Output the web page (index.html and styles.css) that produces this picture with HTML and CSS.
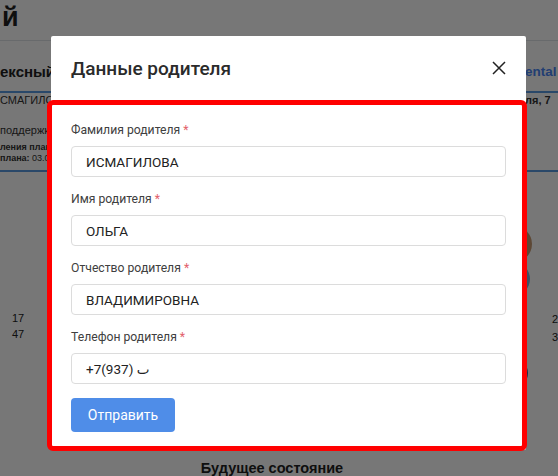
FILE: index.html
```html
<!DOCTYPE html>
<html lang="ru">
<head>
<meta charset="utf-8">
<title>Данные родителя</title>
<link rel="stylesheet" href="styles.css">
</head>
<body>
<div class="page">
  <header class="page-head">
    <h1 class="page-title">й</h1>
  </header>
  <section class="cards">
    <div class="card card-left">
      <h2 class="card-title">ексный</h2>
      <p class="card-line">СМАГИЛОВА</p>
      <p class="card-line card-gap">поддержка Т</p>
      <p class="card-small card-small-first"><b>ления плана:</b></p>
      <p class="card-small"><b>плана:</b> 03.04</p>
    </div>
    <div class="card card-right">
      <h2 class="card-title card-title-blue">ental</h2>
      <p class="card-line"><b>ля, 7</b></p>
    </div>
  </section>
  <section class="charts">
    <div class="chart-left">
      <div class="chart-nums">
        <span>17</span>
        <span>47</span>
      </div>
    </div>
    <div class="chart-mid"></div>
    <div class="chart-right">
      <div class="dots">
        <span class="dot dot-brown"></span>
        <span class="dot dot-blue"></span>
        <span class="dot dot-navy"></span>
      </div>
      <div class="chart-nums chart-nums-right">
        <span>2</span>
        <span>3</span>
      </div>
    </div>
  </section>
  <h2 class="future">Будущее состояние</h2>
</div>

<div class="overlay"></div>

<div class="modal">
  <div class="modal-header">
    <h3 class="modal-title">Данные родителя</h3>
    <button class="close" type="button" aria-label="Закрыть">
      <svg width="14" height="14" viewBox="0 0 14 14"><path d="M1 1L13 13M13 1L1 13" stroke="#222" stroke-width="1.5" fill="none"/></svg>
    </button>
  </div>
  <form class="modal-body">
    <div class="field">
      <label class="label">Фамилия родителя <span class="req">*</span></label>
      <input class="input" value="ИСМАГИЛОВА">
    </div>
    <div class="field">
      <label class="label">Имя родителя <span class="req">*</span></label>
      <input class="input" value="ОЛЬГА">
    </div>
    <div class="field">
      <label class="label">Отчество родителя <span class="req">*</span></label>
      <input class="input" value="ВЛАДИМИРОВНА">
    </div>
    <div class="field">
      <label class="label">Телефон родителя <span class="req">*</span></label>
      <input class="input" value="+7(937) ٮ">
    </div>
    <button class="submit" type="button">Отправить</button>
  </form>
  <div class="highlight"></div>
</div>
</body>
</html>
```

FILE: styles.css
```css
* { box-sizing: border-box; }
html, body { margin: 0; padding: 0; }
body {
  width: 558px;
  height: 476px;
  overflow: hidden;
  background: #fff;
  font-family: "Liberation Sans", Arial, sans-serif;
  color: #333;
}

/* background page */
.page { width: 558px; }
.page-head {
  height: 41px;
  border-bottom: 1px solid #dfe3e8;
}
.page-title {
  margin: 0;
  padding: 2px 0 0 2px;
  font-size: 27px;
  line-height: 30px;
  font-weight: 700;
  color: #222;
}
.cards {
  display: flex;
  justify-content: space-between;
  margin-top: 18px;
}
.card {
  height: 113px;
  border-bottom: 2px solid #5b9be0;
}
.card-left { width: 60px; }
.card-right { width: 33px; }
.card-title {
  margin: 0;
  height: 34px;
  line-height: 26px;
  font-size: 15px;
  font-weight: 700;
  color: #222;
  border-bottom: 2px solid #5b9be0;
  white-space: nowrap;
}
.card-title-blue { color: #4a86f5; font-size: 13.5px; }
.card-line {
  margin: 0;
  font-size: 11px;
  line-height: 14px;
  color: #333;
  white-space: nowrap;
}
.card-gap { margin-top: 16px; }
.card-small {
  margin: 1px 0 0;
  font-size: 9px;
  line-height: 10px;
  color: #333;
  white-space: nowrap;
}
.card-small-first { margin-top: 5px; }
.charts {
  display: flex;
  height: 287px;
}
.chart-left { width: 60px; padding: 138px 0 0 12px; }
.chart-mid { flex: 1; }
.chart-right {
  width: 65px;
  display: flex;
}
.chart-nums {
  display: flex;
  flex-direction: column;
  font-size: 11px;
  line-height: 16px;
  color: #222;
}
.chart-nums-right {
  padding: 138px 0 0 20px;
  line-height: 18px;
}
.dots {
  width: 40px;
  display: flex;
  flex-direction: column;
  align-items: flex-end;
  padding-top: 54px;
}
.dot { display: block; border-radius: 50%; }
.dot-brown { width: 36px; height: 36px; background: #c79a72; }
.dot-blue { width: 34px; height: 34px; margin-right: 2px; background: #7fb2da; }
.dot-navy { width: 30px; height: 30px; margin: 62px 4px 0 0; background: #3c5f9c; }
.future {
  margin: 0;
  text-align: center;
  font-size: 14.5px;
  line-height: 18px;
  font-weight: 700;
  color: #222;
  padding-right: 14px;
}

/* overlay & modal */
.overlay {
  position: fixed;
  inset: 0;
  background: rgba(0, 0, 0, 0.535);
}
.modal {
  position: fixed;
  top: 36px;
  left: 51px;
  width: 475px;
  background: #fff;
  border-radius: 2px;
  font-family: Roboto, "Liberation Sans", sans-serif;
}
.modal-header {
  height: 64px;
  padding: 0 20px;
  display: flex;
  align-items: center;
  justify-content: space-between;
}
.modal-title {
  margin: 0;
  font-size: 19px;
  font-weight: 500;
  color: #2b2b2b;
}
.close {
  border: 0;
  padding: 0;
  background: none;
  width: 14px;
  height: 14px;
  display: flex;
}
.modal-body {
  padding: 21px 20px 18px;
  display: flex;
  flex-direction: column;
  align-items: flex-start;
}
.field {
  width: 100%;
  display: flex;
  flex-direction: column;
  gap: 7px;
  margin-bottom: 13px;
}
.field:nth-child(4) { margin-bottom: 14px; }
.label {
  font-size: 12.2px;
  line-height: 18px;
  color: #404040;
}
.req { color: #e2606a; }
.input {
  width: 100%;
  height: 31px;
  border: 1px solid #dcdcdc;
  border-radius: 4px;
  padding: 0 14px;
  font-family: Roboto, "Liberation Sans", "DejaVu Sans", sans-serif;
  font-size: 13.5px;
  color: #222;
  background: #fff;
}
.submit {
  width: 104px;
  height: 34px;
  border: 0;
  border-radius: 4px;
  background: #4f8de8;
  color: #fff;
  font-family: Roboto, "Liberation Sans", sans-serif;
  font-size: 14px;
  padding: 0;
}
.highlight {
  position: absolute;
  left: -4px;
  right: -1px;
  top: 64px;
  height: 351px;
  border: 5px solid #ff0000;
  border-radius: 6px;
  pointer-events: none;
}
```
